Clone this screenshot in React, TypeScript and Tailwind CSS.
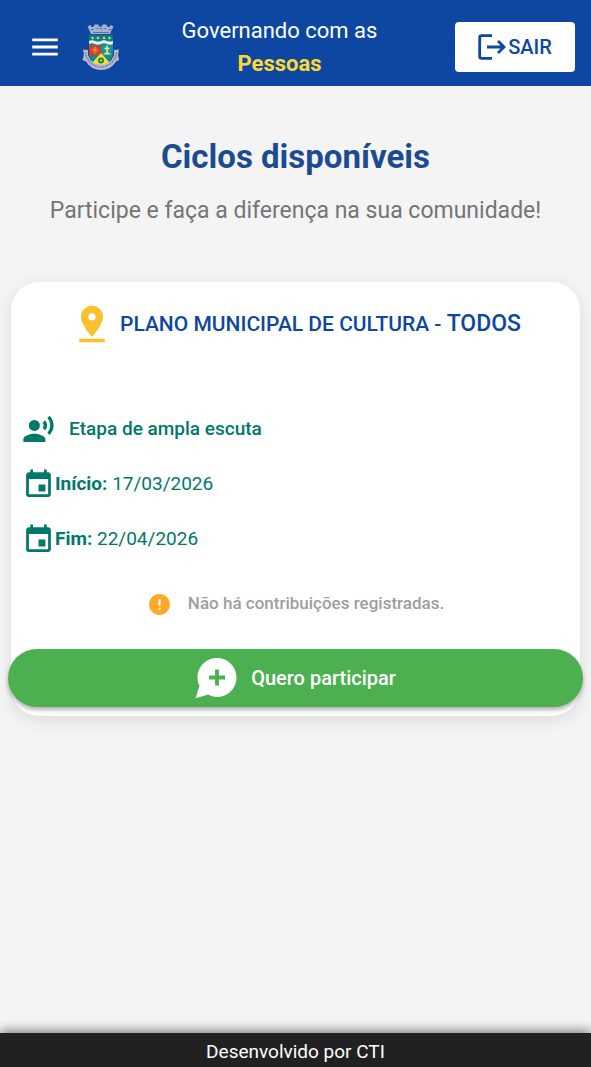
import { MdError, MdEvent, MdMenu, MdPinDrop, MdRecordVoiceOver } from 'react-icons/md';

function Crest() {
  return (
    <svg viewBox="0 0 76 94" className="h-[47px] w-[38px] shrink-0" role="img" aria-label="Brasão do município">
      {/* Mural crown */}
      <path
        d="M11 5l6-3 2 4 5-1 1-4h8l1 4h6l1-4h8l1 4 5 1 2-4 6 3-4 8-3 7H18l-3-7z"
        fill="#a3b4d2"
      />
      <path d="M18 11h6M29 9h5M38 7v5M43 9h5M53 11h6M22 17h32" stroke="#5b70a0" strokeWidth="2" />
      {/* Shield */}
      <path d="M14 22h48v33c0 17-10 26-24 29-14-3-24-12-24-29z" fill="#178a8f" />
      <path d="M14 22h48v11H14z" fill="#087d86" />
      <path d="M14 34q6-3 12 0t12 0 12 0 12 0v6q-6 3-12 0t-12 0-12 0-12 0z" fill="#e7f4f2" />
      <path d="M14 43h24v20H17l-3-8z" fill="#d43b24" />
      <path d="M38 43h24v12l-3 8H38z" fill="#1595a0" />
      <path d="M26 45v15M18 52h16M22 47l8 10M30 47l-8 10" stroke="#f08a36" strokeWidth="2" />
      <path d="M50 43v15M45 49h10" stroke="#f5ed8a" strokeWidth="3" />
      <path d="M42 61q8-9 16 0z" fill="#e8e373" />
      <path d="M38 58l18 20q-8 8-18 8t-18-8z" fill="#efe03a" />
      <circle cx="38" cy="73" r="6" fill="#188348" />
      <path d="M35 73h6M38 70v6" stroke="#e9d638" strokeWidth="1.5" />
      <g fill="#d8dc45">
        <circle cx="21" cy="28" r="2.5" />
        <circle cx="32" cy="28" r="2.5" />
        <circle cx="44" cy="28" r="2.5" />
        <circle cx="55" cy="28" r="2.5" />
      </g>
      {/* Ribbon */}
      <path
        d="M2 51l10 1v10l5 10q9 9 21 9t21-9l5-10V52l10-1-2 10 2 11-6 3q-10 17-30 17T8 75l-7-3 3-11z"
        fill="#b9b8cf"
      />
      <path d="M7 57l2 10 7 10q10 9 22 9t22-9l7-10 2-10" fill="none" stroke="#77729a" strokeWidth="3" strokeDasharray="3 2" />
    </svg>
  );
}

function LogoutIcon() {
  return (
    <svg viewBox="0 0 28 26" className="h-[26px] w-[28px] shrink-0" fill="none" stroke="currentColor" aria-hidden="true">
      <path d="M14 1.6H3.5Q1.7 1.6 1.7 3.4v19.2q0 1.800 1.800 1.800H14" strokeWidth="2.8" />
      <path d="M9 13h16M20 7l6 6-6 6" strokeWidth="2.8" />
    </svg>
  );
}

function ChatPlusIcon() {
  return (
    <svg viewBox="0 0 42 42" className="h-[42px] w-[42px] shrink-0" aria-hidden="true">
      <path
        d="M22 1C11.2 1 2.5 9.7 2.5 20.5c0 3.2.7 5.8 2 8.300L.6 41.2l12.6-3.6c2.700 1.500 5.500 2.400 8.800 2.400 10.800 0 19.500-8.700 19.500-19.500S32.800 1 22 1z"
        fill="currentColor"
      />
      <path d="M22 12.5v16M14 20.5h16" stroke="#4caf50" strokeWidth="3.8" />
    </svg>
  );
}

export default function App() {
  const dates = [
    { label: 'Início:', value: '17/03/2026' },
    { label: 'Fim:', value: '22/04/2026' },
  ];

  return (
    <div className="flex min-h-screen flex-col bg-[#f4f4f4] font-[Roboto,sans-serif]">
      {/* Header */}
      <header className="flex items-center bg-[#0d47a1] pt-3.5 pr-4 pb-1.5 pl-7 text-white">
        <button type="button" aria-label="Abrir menu" className="shrink-0">
          <MdMenu className="size-[34px]" />
        </button>
        <div className="ml-5">
          <Crest />
        </div>
        <p className="flex-1 pr-4 text-center text-[22px] leading-[33px]">
          Governando com as
          <b className="block font-bold text-[#fdd835]">Pessoas</b>
        </p>
        <button
          type="button"
          className="flex h-[50px] w-[120px] shrink-0 items-center justify-center gap-0.5 rounded-sm bg-white text-[20px] font-medium text-[#0d47a1]"
        >
          <LogoutIcon />
          SAIR
        </button>
      </header>

      <main className="flex-1 px-[11px] pt-12 pb-12">
        <div className="text-center">
          <h1 className="text-[33px] leading-[46px] font-bold text-[#1c4b91]">Ciclos disponíveis</h1>
          <p className="mt-4 text-[23px] leading-[30px] text-[#757575]">Participe e faça a diferença na sua comunidade!</p>
        </div>

        {/* Cycle card */}
        <section className="mt-14 rounded-[28px] bg-white pt-5 pb-[9px] shadow-[0_4px_16px_rgba(0,0,0,0.1)]">
          <div className="flex items-center justify-center gap-1.5">
            <MdPinDrop className="size-11 shrink-0 text-[#fbc02d]" />
            <h2 className="text-[21px] leading-8 font-medium text-[#0d47a1]">
              PLANO MUNICIPAL DE CULTURA - <span className="text-[23px]">TODOS</span>
            </h2>
          </div>

          <div className="mt-14 px-[11px] text-[19px] text-[#00796b]">
            <div className="flex h-[55px] items-center">
              <MdRecordVoiceOver className="size-[33px] shrink-0" />
              <p className="ml-3.5 font-medium">Etapa de ampla escuta</p>
            </div>
            {dates.map((date) => (
              <div key={date.label} className="flex h-[55px] items-center">
                <MdEvent className="size-[33px] shrink-0" />
                <p>
                  <b className="font-bold">{date.label}</b> {date.value}
                </p>
              </div>
            ))}
          </div>

          <div className="mt-6 flex h-[26px] items-center justify-center gap-4 text-[17px] font-medium text-[#9e9e9e]">
            <MdError className="size-[25px] shrink-0 text-[#ffa726]" />
            <p>Não há contribuições registradas.</p>
          </div>

          <button
            type="button"
            className="-mx-[3px] mt-8 flex h-[58px] w-[calc(100%+6px)] items-center justify-center gap-3.5 rounded-full bg-[#4caf50] text-[20px] font-medium text-white shadow-[0_3px_4px_rgba(0,0,0,0.3)]"
          >
            <ChatPlusIcon />
            Quero participar
          </button>
        </section>
      </main>

      {/* Footer */}
      <footer className="bg-[#212121] pt-1 text-center text-[19px] leading-[30px] text-white shadow-[0_-3px_10px_rgba(0,0,0,0.45)]">
        Desenvolvido por CTI
      </footer>
    </div>
  );
}
